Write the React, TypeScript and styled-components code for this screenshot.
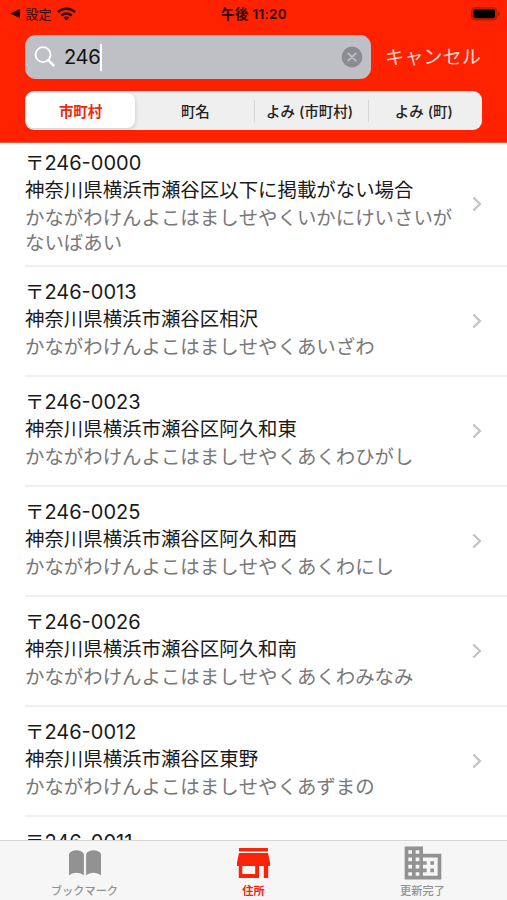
import React, { useState } from 'react'
import styled, { createGlobalStyle } from 'styled-components'
import { MdBusiness } from 'react-icons/md'

interface Address {
  code: string
  name?: string
  kana?: string
}

const addresses: Address[] = [
  {
    code: '246-0000',
    name: '神奈川県横浜市瀬谷区以下に掲載がない場合',
    kana: 'かながわけんよこはましせやくいかにけいさいがないばあい',
  },
  { code: '246-0013', name: '神奈川県横浜市瀬谷区相沢', kana: 'かながわけんよこはましせやくあいざわ' },
  { code: '246-0023', name: '神奈川県横浜市瀬谷区阿久和東', kana: 'かながわけんよこはましせやくあくわひがし' },
  { code: '246-0025', name: '神奈川県横浜市瀬谷区阿久和西', kana: 'かながわけんよこはましせやくあくわにし' },
  { code: '246-0026', name: '神奈川県横浜市瀬谷区阿久和南', kana: 'かながわけんよこはましせやくあくわみなみ' },
  { code: '246-0012', name: '神奈川県横浜市瀬谷区東野', kana: 'かながわけんよこはましせやくあずまの' },
  { code: '246-0011' },
]

const scopes = ['市町村', '町名', 'よみ (市町村)', 'よみ (町)']

function WifiIcon() {
  return (
    <svg width='19' height='14' viewBox='0 0 19 14' fill='none' stroke='#2b0500'>
      <path d='M1 5.2C5.6 .6 13.4 .6 18 5.2' strokeWidth='2.6' />
      <path d='M4.3 8.6c2.9-2.8 7.5-2.8 10.4 0' strokeWidth='2.5' />
      <path d='M9.5 13.4 6.6 10.6c1.6-1.5 4.2-1.5 5.8 0z' fill='#2b0500' stroke='none' />
    </svg>
  )
}

function BatteryIcon() {
  return (
    <svg width='30' height='14' viewBox='0 0 30 14'>
      <rect x='.5' y='.5' width='25.5' height='12.5' rx='3.6' fill='#d01c00' stroke='#b81900' />
      <rect x='2.5' y='2.2' width='21.5' height='9' rx='2' fill='#000' />
      <path d='M27.3 4.6c2 .8 2 4 0 4.8z' fill='#9c1500' />
    </svg>
  )
}

function SearchIcon() {
  return (
    <svg width='22' height='22' viewBox='0 0 22 22' fill='none' stroke='#fff' strokeLinecap='round'>
      <circle cx='9' cy='8.6' r='7.5' strokeWidth='1.8' />
      <path d='m14.6 14.4 4.9 4.9' strokeWidth='2.6' />
    </svg>
  )
}

function ClearIcon() {
  return (
    <svg width='22' height='22' viewBox='0 0 22 22'>
      <circle cx='11' cy='11' r='10.4' fill='#8b8b91' />
      <path d='m7.3 7.3 7.4 7.4m0-7.4-7.4 7.4' stroke='#bfbfc6' strokeWidth='1.7' strokeLinecap='round' />
    </svg>
  )
}

function ChevronIcon() {
  return (
    <svg width='10' height='16' viewBox='0 0 10 16' fill='none' stroke='#c3c3c6' strokeWidth='2.3'>
      <path d='m1.3 1.5 6.7 6.5-6.7 6.5' />
    </svg>
  )
}

function BookIcon() {
  return (
    <svg width='34' height='28' viewBox='0 0 34 28' fill='#929292'>
      <path d='M1 5C3.5 0 13.3 0 15.9 5V26.5C12 22.9 5 22.9 1 26.5z' />
      <path d='M18.1 5C20.7 0 30.5 0 33 5V26.5C29 22.9 22 22.9 18.1 26.5z' />
    </svg>
  )
}

function StoreIcon() {
  return (
    <svg width='33' height='30' viewBox='0 0 33 30' fill='#f92308'>
      <path d='M2 0h29v3.5H2z' />
      <path
        fillRule='evenodd'
        d='M2 5h29l2 9.5V18h-1.8v12h-4.4V18H22v12H1.8V18H0v-3.5zM5.3 18v8h12.9v-8z'
      />
    </svg>
  )
}

export default function App() {
  const [scope, setScope] = useState(0)

  return (
    <Screen>
      <GlobalStyle />
      <Header>
        <StatusBar>
          <BackTo>
            <BackArrow viewBox='0 0 10 9'>
              <path d='M0 4.5 10 0v9z' />
            </BackArrow>
            設定
            <WifiIcon />
          </BackTo>
          <Clock>午後 11:20</Clock>
          <Battery>
            <BatteryIcon />
          </Battery>
        </StatusBar>
        <SearchBar>
          <SearchField>
            <SearchIcon />
            <Query>246</Query>
            <Caret />
            <ClearIcon />
          </SearchField>
          <Cancel>キャンセル</Cancel>
        </SearchBar>
        <Scopes>
          {scopes.map((label, i) => (
            <Scope
              key={label}
              $active={i === scope}
              $divided={i > 0 && i !== scope && i - 1 !== scope}
              onClick={() => setScope(i)}
            >
              {label}
            </Scope>
          ))}
        </Scopes>
      </Header>
      <List>
        {addresses.map((address, i) => (
          <Row key={address.code} $first={i === 0} $loaded={!!address.name}>
            <Texts>
              <Code>
                <PostMark>〒</PostMark>
                {address.code}
              </Code>
              {address.name && <Name>{address.name}</Name>}
              {address.kana && <Kana>{address.kana}</Kana>}
            </Texts>
            {address.name && <ChevronIcon />}
          </Row>
        ))}
      </List>
      <TabBar>
        <Tab>
          <TabIcon>
            <BookIcon />
          </TabIcon>
          ブックマーク
        </Tab>
        <Tab $active>
          <TabIcon>
            <StoreIcon />
          </TabIcon>
          住所
        </Tab>
        <Tab>
          <TabIcon>
            <MdBusiness size={44} />
          </TabIcon>
          更新完了
        </Tab>
      </TabBar>
    </Screen>
  )
}

const GlobalStyle = createGlobalStyle`
  * {
    box-sizing: border-box;
  }
  body {
    margin: 0;
    font-family: Inter, 'Noto Sans CJK JP', sans-serif;
  }
  svg {
    flex-shrink: 0;
    display: block;
  }
`

const Screen = styled.div`
  display: flex;
  flex-direction: column;
  width: 507px;
  height: 900px;
  overflow: hidden;
  background-color: #fff;
`

const Header = styled.header`
  flex-shrink: 0;
  height: 143px;
  background-color: #ff2200;
  border-bottom: 1px solid #f4573d;
`

const StatusBar = styled.div`
  display: grid;
  grid-template-columns: 1fr auto 1fr;
  align-items: center;
  height: 27px;
  padding: 0 6px 0 10px;
  color: #2b0500;
`

const BackTo = styled.div`
  display: flex;
  align-items: center;
  gap: 5.5px;
  height: 26px;
  font-size: 13px;
  line-height: 20px;
`

const BackArrow = styled.svg`
  width: 10px;
  height: 9px;
  fill: #2b0500;
`

const Clock = styled.div`
  margin-right: 3px;
  font-size: 13.5px;
  font-weight: 600;
  line-height: 20px;
  letter-spacing: 0.3px;
  white-space: pre;
`

const Battery = styled.div`
  display: flex;
  justify-content: flex-end;
`

const SearchBar = styled.div`
  display: flex;
  align-items: center;
  gap: 14px;
  margin: 8px 25px 0;
`

const SearchField = styled.div`
  display: flex;
  align-items: center;
  width: 346px;
  height: 44px;
  padding: 0 8px 0 9px;
  border-radius: 11px;
  background-color: #bfbfc6;
`

const Query = styled.span`
  margin-left: 8px;
  font-size: 20px;
  letter-spacing: -0.3px;
  color: #111;
`

const Caret = styled.span`
  width: 2px;
  height: 27px;
  margin-right: auto;
  background-color: #fff;
`

const Cancel = styled.span`
  font-size: 19.2px;
  line-height: 28px;
  white-space: nowrap;
  color: #ffd5cd;
`

const Scopes = styled.div`
  display: flex;
  height: 39px;
  margin: 12px 25px 0;
  border-radius: 9px;
  background-color: #f0eff0;
`

const Scope = styled.button<{ $active: boolean; $divided: boolean }>`
  display: flex;
  align-items: center;
  justify-content: center;
  flex: none;
  width: 25%;
  padding: 0 2px 0 0;
  border: 0;
  white-space: pre;
  font-family: inherit;
  font-size: 14.5px;
  font-weight: ${({ $active }) => ($active ? 700 : 500)};
  color: ${({ $active }) => ($active ? '#ea2a12' : '#222')};
  background: ${({ $divided }) =>
    $divided ? 'linear-gradient(#d5d5d8, #d5d5d8) left center / 1px 22px no-repeat' : 'none'};
  ${({ $active }) =>
    $active &&
    `
    width: calc(25% - 5px);
    margin: 2px 4px 2px 1px;
    padding: 0;
    border-radius: 8px;
    background: #fff;
    box-shadow: 1px 2px 4px rgba(0, 0, 0, 0.12);
  `}
`

const List = styled.main`
  flex: 1;
  min-height: 0;
  overflow: hidden;
`

const Row = styled.div<{ $first: boolean; $loaded: boolean }>`
  display: flex;
  align-items: ${({ $loaded }) => ($loaded ? 'center' : 'flex-start')};
  justify-content: space-between;
  height: ${({ $first }) => ($first ? 123.5 : 110)}px;
  margin-left: 25px;
  padding-top: ${({ $loaded }) => ($loaded ? 0 : 15)}px;
  padding-right: 25px;
  border-bottom: 2px solid #f0f0f0;
`

const Texts = styled.div`
  width: 432px;
  margin-top: -2.5px;
  font-size: 19.43px;
  white-space: nowrap;
  color: #1a1a1a;
`

const Code = styled.div`
  height: 27px;
  font-size: 20px;
  line-height: 26px;
`

const PostMark = styled.span`
  font-size: 19.4px;
`

const Name = styled.div`
  line-height: 27px;
`

const Kana = styled.div`
  padding-top: 2px;
  line-height: 25px;
  white-space: normal;
  word-break: break-all;
  color: #787878;
`

const TabBar = styled.nav`
  display: flex;
  flex-shrink: 0;
  height: 60px;
  border-top: 1px solid #d6d6d6;
  background-color: #f6f6f6;
`

const Tab = styled.div<{ $active?: boolean }>`
  display: flex;
  flex-direction: column;
  align-items: center;
  flex: 1;
  padding-top: 8px;
  font-size: 11.2px;
  font-weight: ${({ $active }) => ($active ? 700 : 500)};
  line-height: 14px;
  color: ${({ $active }) => ($active ? '#f92308' : '#929292')};
`

const TabIcon = styled.span`
  display: flex;
  align-items: center;
  justify-content: center;
  height: 29px;
  margin: -1px 0 7px;
`
